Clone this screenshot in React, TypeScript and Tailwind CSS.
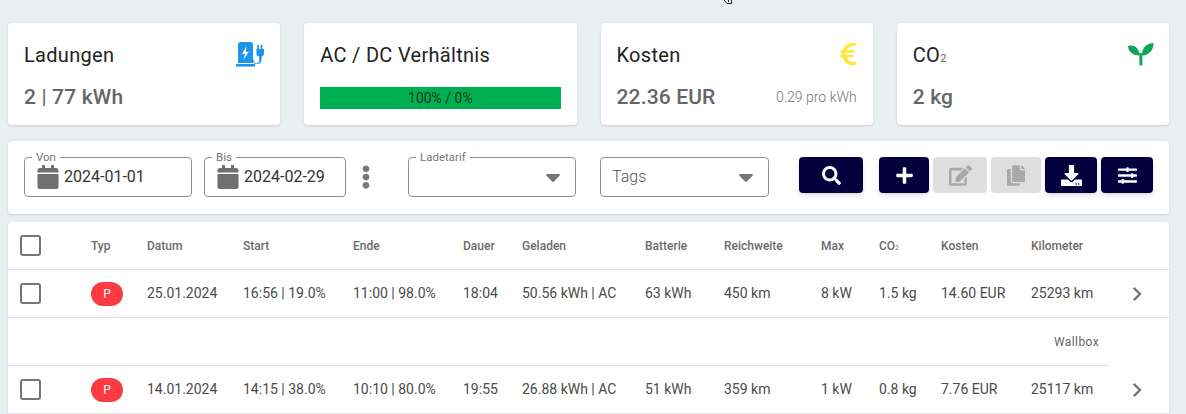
import React from 'react';
import { FaCalendar, FaCaretDown, FaCopy, FaDownload, FaEdit, FaEllipsisV, FaEuroSign, FaPlus, FaSearch, FaSlidersH } from 'react-icons/fa';
import { MdChevronRight } from 'react-icons/md';

const rowGrid = 'grid grid-cols-[83px_56px_96px_110px_110px_59px_123px_79px_97px_58px_62px_90px_1fr] items-center';

const Sub2 = () => <span className="text-[0.55em] font-normal text-[#666]">2</span>;

const EvIcon = () => (
  <svg viewBox="0 0 28 25" className="w-7 h-[25px] text-[#1e96e8]" fill="currentColor">
    <path fillRule="evenodd" d="M2 2.5A2.5 2.5 0 0 1 4.5 0h10A2.5 2.5 0 0 1 17 2.5V21H2zM10.6 4 6 12h3l-1.2 5.5 5-7.7H9.8z" />
    <rect x="0" y="22" width="19" height="2.6" />
    <path d="M21.2 3h1.8v4h1.6V3h1.8v4H28v4.5a3 3 0 0 1-2.4 3v3a4.6 4.6 0 0 1-4.6 4.6 4.6 4.6 0 0 1-4-2.4v-3.6c.6 1.2.4 2.4 1 3.2a2.6 2.6 0 0 0 5.2-1.8v-3a3 3 0 0 1-2.8-3V7h.8z" />
  </svg>
);

const SproutIcon = () => (
  <svg viewBox="0 0 26 24" className="w-[26px] h-6 -mr-[1px] mt-[1px] text-[#0aa854]" fill="currentColor">
    <path d="M0 3C5 1.5 11 4 11.6 12.4 5 12.8.5 9 0 3z" />
    <path d="M25.5 0C26 7 20 12.8 14 12.4 13.5 5 19 0 25.5 0z" />
    <path d="M11.3 10h2.9l.2 12.5h-2.9z" />
  </svg>
);

const StatCard = ({ title, icon, children }: { title: React.ReactNode; icon?: React.ReactNode; children: React.ReactNode }) => (
  <div className="bg-white rounded shadow-sm h-[102px] px-4 pt-[19px] flex flex-col">
    <div className="flex justify-between items-start h-[26px]">
      <span className="text-[20px] tracking-[0.3px] leading-[26px] text-[#222]">{title}</span>
      {icon}
    </div>
    <div className="mt-[14px]">{children}</div>
  </div>
);

const Outlined = ({ label, width, children }: { label?: string; width: string; children: React.ReactNode }) => (
  <div className={`relative h-10 border border-[#8f8f8f] rounded flex items-center ${width}`}>
    {label && (
      <span className="absolute -top-[7px] left-[7px] bg-white px-[4px] text-[11.5px] leading-[12px] text-[#777]">{label}</span>
    )}
    {children}
  </div>
);

const DateField = ({ label, value, width }: { label: string; value: string; width: string }) => (
  <Outlined label={label} width={width}>
    <FaCalendar className="ml-[12px] w-[22px] h-6 text-[#6f6f6f]" />
    <span className="ml-[5px] text-[16px] text-[#333]">{value}</span>
  </Outlined>
);

const ToolButton = ({ width, disabled, children }: { width: string; disabled?: boolean; children: React.ReactNode }) => (
  <button
    className={`h-9 rounded flex items-center justify-center ${width} ${
      disabled ? 'bg-[#dedede] text-[#a9a9a9]' : 'bg-[#03023f] text-white shadow-md'
    }`}
  >
    {children}
  </button>
);

const Checkbox = () => <div className="ml-3 w-[21px] h-[21px] border-[2px] border-[#757575] rounded-[3px]" />;

const charges = [
  { date: '25.01.2024', start: '16:56 | 19.0%', end: '11:00 | 98.0%', dur: '18:04', kwh: '50.56 kWh | AC', batt: '63 kWh', range: '450 km', max: '8 kW', co2: '1.5 kg', cost: '14.60 EUR', km: '25293 km' },
  { date: '14.01.2024', start: '14:15 | 38.0%', end: '10:10 | 80.0%', dur: '19:55', kwh: '26.88 kWh | AC', batt: '51 kWh', range: '359 km', max: '1 kW', co2: '0.8 kg', cost: '7.76 EUR', km: '25117 km' },
];

const ChargeRow = ({ c }: { c: (typeof charges)[number] }) => (
  <div className={`${rowGrid} h-12 text-[14px] text-[#4a4a4a] border-b border-[#e0e0e0]`}>
    <Checkbox />
    <div>
      <span className="flex w-8 h-6 rounded-full bg-[#fb3b41] text-white text-[12px] items-center justify-center">P</span>
    </div>
    <span>{c.date}</span>
    <span>{c.start}</span>
    <span>{c.end}</span>
    <span>{c.dur}</span>
    <span>{c.kwh}</span>
    <span>{c.batt}</span>
    <span>{c.range}</span>
    <span>{c.max}</span>
    <span>{c.co2}</span>
    <span>{c.cost}</span>
    <span>{c.km}</span>
  </div>
);

const Chevron = () => <MdChevronRight className="absolute right-[18px] w-7 h-7 text-[#757575]" />;

export default function App() {
  return (
    <div className="relative h-[414px] overflow-hidden bg-[#e9eef1] pl-2 pr-[17px] pt-[23px] font-['Roboto',sans-serif]">
      {/* stray mouse pointer at the top edge */}
      <svg viewBox="0 0 10 6" className="absolute top-0 left-[723px] w-[10px] h-[6px]" fill="none" stroke="#222" strokeWidth="1">
        <path d="M1 0l3 3.5h4.5V0M5.5 0v2" />
      </svg>

      <div className="grid grid-cols-4 gap-x-6">
        <StatCard title="Ladungen" icon={<EvIcon />}>
          <span className="text-[21px] tracking-[0.15px] font-medium text-[#666]">2 <span className="font-normal">|</span> 77 kWh</span>
        </StatCard>
        <StatCard title="AC / DC Verhältnis">
          <div className="h-[22px] mt-[5px] bg-[#00b050] flex items-center justify-center text-[14px] text-[#16351d]">100% / 0%</div>
        </StatCard>
        <StatCard title="Kosten" icon={<FaEuroSign className="w-[17px] h-[26px] -mt-[1px] text-[#fde745]" />}>
          <div className="flex justify-between items-center">
            <span className="text-[21px] tracking-[0.15px] font-medium text-[#666]">22.36 EUR</span>
            <span className="text-[14px] font-light text-[#777]">0.29 pro kWh</span>
          </div>
        </StatCard>
        <StatCard title={<>CO<Sub2 /></>} icon={<SproutIcon />}>
          <span className="text-[21px] tracking-[0.15px] font-medium text-[#666]">2 kg</span>
        </StatCard>
      </div>

      <div className="mt-4 h-[73px] bg-white rounded shadow-sm pl-4 pt-4 flex items-start">
        <DateField label="Von" value="2024-01-01" width="w-[168px]" />
        <div className="ml-3">
          <DateField label="Bis" value="2024-02-29" width="w-[142px]" />
        </div>
        <FaEllipsisV className="ml-[10px] mt-2 w-[20px] h-6 text-[#777]" />
        <div className="ml-[32px]">
          <Outlined label="Ladetarif" width="w-[168px]">
            <FaCaretDown className="ml-auto mr-[10px] w-6 h-6 text-[#757575]" />
          </Outlined>
        </div>
        <div className="ml-6">
          <Outlined width="w-[169px]">
            <span className="ml-[11px] text-[16px] font-light text-[#555]">Tags</span>
            <FaCaretDown className="ml-auto mr-[10px] w-6 h-6 text-[#757575]" />
          </Outlined>
        </div>
        <div className="ml-[30px]">
          <ToolButton width="w-16"><FaSearch className="w-[19px] h-[19px]" /></ToolButton>
        </div>
        <div className="ml-[16px] flex gap-1">
          <ToolButton width="w-[50px]"><FaPlus className="w-[19px] h-[19px]" /></ToolButton>
          <ToolButton width="w-[54px]" disabled><FaEdit className="w-[23px] h-[21px]" /></ToolButton>
          <ToolButton width="w-[50px]" disabled><FaCopy className="w-[18px] h-[21px]" /></ToolButton>
          <ToolButton width="w-[52px]"><FaDownload className="w-[21px] h-[21px]" /></ToolButton>
          <ToolButton width="w-[52px]"><FaSlidersH className="w-[21px] h-[19px]" /></ToolButton>
        </div>
      </div>

      <div className="mt-2 bg-white rounded-t shadow-sm">
        <div className={`${rowGrid} h-12 text-[12px] font-medium text-[#6b6b6b] border-b border-[#e0e0e0]`}>
          <Checkbox />
          <span>Typ</span>
          <span>Datum</span>
          <span>Start</span>
          <span>Ende</span>
          <span>Dauer</span>
          <span>Geladen</span>
          <span>Batterie</span>
          <span>Reichweite</span>
          <span>Max</span>
          <span>CO<Sub2 /></span>
          <span>Kosten</span>
          <span>Kilometer</span>
        </div>
        <div className="relative flex items-center">
          <div className="flex-1"><ChargeRow c={charges[0]} /></div>
          <Chevron />
        </div>
        <div className="h-12 mr-[60px] pr-[10px] flex items-center justify-end text-[12px] tracking-[0.4px] text-[#666] border-b border-[#e0e0e0]">
          Wallbox
        </div>
        <div className="relative flex items-center">
          <div className="flex-1"><ChargeRow c={charges[1]} /></div>
          <Chevron />
        </div>
      </div>
    </div>
  );
}
